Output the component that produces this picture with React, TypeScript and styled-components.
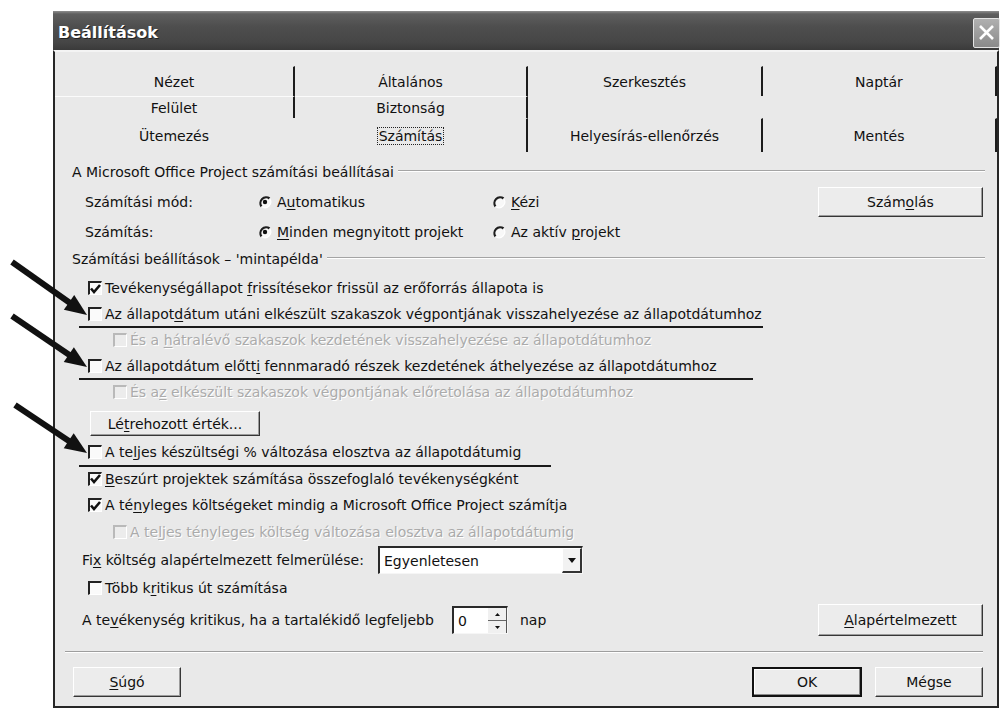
import React from "react";
import styled, { createGlobalStyle } from "styled-components";

const GlobalStyle = createGlobalStyle`
  html, body { margin: 0; padding: 0; background: #ffffff; }
  body {
    font-family: "DejaVu Sans", "Noto Sans", sans-serif;
    font-size: 14px;
    color: #111;
  }
  #root { width: 1004px; height: 715px; overflow: hidden; }
`;

const Screen = styled.div`
  position: relative;
  width: 1004px;
  height: 715px;
  box-sizing: border-box;
  padding: 11px 0 0 53px;
`;

const Dialog = styled.div`
  width: 946px;
  display: flex;
  flex-direction: column;
`;

const TitleBar = styled.div`
  height: 39px;
  box-sizing: border-box;
  display: flex;
  align-items: center;
  padding: 4px 0 0 5px;
  background: linear-gradient(
    to bottom,
    #8e8e8e 0px,
    #5e5e5e 3px,
    #4e4e4e 40%,
    #464646 80%,
    #3a3a3a 100%
  );
`;

const Title = styled.span`
  flex: 1;
  color: #fff;
  font-weight: bold;
  font-size: 16px;
  text-shadow: 1px 1px 0 #222;
`;

const CloseButton = styled.span`
  width: 27px;
  height: 30px;
  margin-right: -1px;
  box-sizing: border-box;
  border: 1px solid #e4e4e4;
  border-radius: 2px;
  background: linear-gradient(to bottom, #b0b0b0, #8a8a8a);
  display: flex;
  align-items: center;
  justify-content: center;
`;

const Body = styled.div`
  background: #e9e9e9;
  border: 2px solid #262626;
  border-top: 2px solid #f4f4f4;
  display: flex;
  flex-direction: column;
`;

const TabStrip = styled.div`
  margin-top: 14px;
  display: grid;
  grid-template-columns: 240px 233px 235px 234px;
  grid-template-rows: 30px 22px 34px;
`;

const Tab = styled.div<{ $col: number; $row: number; $sep: boolean; $hl: boolean }>`
  grid-column: ${(p) => p.$col};
  grid-row: ${(p) => p.$row};
  display: flex;
  align-items: center;
  justify-content: center;
  box-sizing: border-box;
  border-right: 2px solid ${(p) => (p.$sep ? "#1c1c1c" : "transparent")};
  border-top: 1px solid ${(p) => (p.$hl ? "#fbfbfb" : "transparent")};
`;

const Focus = styled.span`
  border: 1px dotted #222;
  padding: 0 1px;
`;

const Page = styled.div`
  padding: 8px 12px 0 17px;
  display: flex;
  flex-direction: column;
`;

const GroupHeader = styled.div`
  height: 24px;
  display: flex;
  align-items: center;
`;

const GroupRule = styled.span`
  flex: 1;
  margin-left: 4px;
  border-top: 1px solid #a4a4a4;
  border-bottom: 1px solid #ffffff;
  margin-top: -2px;
`;

const ModeRow = styled.div<{ $first?: boolean }>`
  height: 30px;
  display: flex;
  align-items: center;
  padding-left: 13px;
  margin-top: ${(p) => (p.$first ? "3px" : "0")};
`;

const ModeLabel = styled.span`
  width: 173px;
`;

const RadioCell = styled.label<{ $grow?: boolean }>`
  display: flex;
  align-items: center;
  gap: 5px;
  width: ${(p) => (p.$grow ? "auto" : "234px")};
  flex: ${(p) => (p.$grow ? 1 : "none")};
`;

const PushButton = styled.button<{ $w: number; $h: number; $default?: boolean }>`
  width: ${(p) => p.$w}px;
  height: ${(p) => p.$h}px;
  flex: none;
  box-sizing: border-box;
  font: inherit;
  color: #111;
  background: #ececec;
  padding: 0;
  border: ${(p) => (p.$default ? "2px solid #111" : "1px solid")};
  border-color: ${(p) => (p.$default ? "#111" : "#ffffff #363636 #363636 #ffffff")};
  box-shadow: ${(p) =>
    p.$default
      ? "inset -1px -1px 0 #8a8a8a, inset 1px 1px 0 #fff"
      : "inset -1px -1px 0 #9c9c9c"};
  cursor: default;
`;

const RightButton = styled(PushButton)`
  margin-left: auto;
  margin-right: 2px;
`;

const CheckList = styled.div<{ $top?: number }>`
  display: flex;
  flex-direction: column;
  align-items: flex-start;
  padding-left: 16px;
  margin-top: ${(p) => p.$top ?? 0}px;
`;

const CheckRow = styled.div<{ $h: number; $indent?: boolean; $line?: number }>`
  position: relative;
  height: ${(p) => p.$h}px;
  display: flex;
  align-items: center;
  margin-left: ${(p) => (p.$indent ? "25px" : "0")};

  &::after {
    content: "";
    display: ${(p) => (p.$line !== undefined ? "block" : "none")};
    position: absolute;
    left: -9px;
    right: ${(p) => -(p.$line ?? 0)}px;
    bottom: -1px;
    height: 2px;
    background: #1a1a1a;
  }
`;

const Box = styled.span<{ $disabled?: boolean }>`
  width: 14px;
  height: 14px;
  flex: none;
  box-sizing: border-box;
  border-top: 2px solid ${(p) => (p.$disabled ? "#b9b9b9" : "#222")};
  border-left: 2px solid ${(p) => (p.$disabled ? "#b9b9b9" : "#222")};
  border-right: 1px solid #ffffff;
  border-bottom: 1px solid #ffffff;
  background: ${(p) => (p.$disabled ? "#ececec" : "#fafafa")};
  display: flex;
  align-items: center;
  justify-content: center;
`;

const CheckText = styled.span<{ $disabled?: boolean }>`
  margin-left: 3px;
  white-space: nowrap;
  color: ${(p) => (p.$disabled ? "#ababab" : "#111")};
  text-shadow: ${(p) => (p.$disabled ? "1px 1px 0 #ffffff" : "none")};
`;

const Acc = styled.span`
  text-decoration: underline;
  text-underline-offset: 2px;
`;

const ButtonRow = styled.div`
  margin: 6px 0 3px 2px;
`;

const FieldRow = styled.div<{ $h: number; $top?: number }>`
  height: ${(p) => p.$h}px;
  margin-top: ${(p) => p.$top ?? 0}px;
  display: flex;
  align-items: center;
  padding-left: 10px;
`;

const FieldLabel = styled.span<{ $w: number }>`
  width: ${(p) => p.$w}px;
  flex: none;
  white-space: nowrap;
`;

const Select = styled.div`
  width: 205px;
  height: 28px;
  box-sizing: border-box;
  display: flex;
  background: #ffffff;
  border-top: 2px solid #2a2a2a;
  border-left: 2px solid #2a2a2a;
  border-right: 1px solid #f6f6f6;
  border-bottom: 1px solid #f6f6f6;
`;

const SelectValue = styled.span`
  flex: 1;
  display: flex;
  align-items: center;
  padding-left: 4px;
`;

const SelectButton = styled.span`
  width: 20px;
  box-sizing: border-box;
  display: flex;
  align-items: center;
  justify-content: center;
  background: #f2f2f2;
  border-top: 1px solid #fff;
  border-left: 1px solid #fff;
  border-right: 2px solid #333;
  border-bottom: 2px solid #333;
`;

const Spinner = styled.div`
  width: 56px;
  height: 28px;
  box-sizing: border-box;
  display: flex;
  background: #ffffff;
  border-top: 2px solid #2a2a2a;
  border-left: 2px solid #2a2a2a;
  border-right: 1px solid #f6f6f6;
  border-bottom: 1px solid #f6f6f6;
`;

const SpinValue = styled.span`
  flex: 1;
  display: flex;
  align-items: center;
  padding-left: 4px;
`;

const SpinButtons = styled.span`
  width: 18px;
  display: flex;
  flex-direction: column;
  background: #f0f0f0;
  border-right: 1px solid #555;
`;

const SpinHalf = styled.span<{ $top?: boolean }>`
  flex: 1;
  display: flex;
  align-items: center;
  justify-content: center;
  border-bottom: ${(p) => (p.$top ? "1px solid #666" : "none")};
`;

const Unit = styled.span`
  margin-left: 12px;
`;

const Separator = styled.div`
  margin: 15px 14px 0 10px;
  border-top: 1px solid #9e9e9e;
  border-bottom: 1px solid #ffffff;
`;

const BottomRow = styled.div`
  margin-top: 14px;
  padding: 0 14px 9px 18px;
  display: flex;
  align-items: center;
  gap: 13px;
`;

const Spacer = styled.span`
  flex: 1;
`;

const Annotations = styled.svg`
  position: absolute;
  left: 0;
  top: 0;
  pointer-events: none;
`;

/* ---------- small drawings ---------- */

const CheckMark = () => (
  <svg width="11" height="10" viewBox="0 0 11 10">
    <polyline points="1,4.5 4,8 10,1" fill="none" stroke="#111" strokeWidth="2.6" />
  </svg>
);

const Radio = ({ checked }: { checked?: boolean }) => (
  <svg width="14" height="14" viewBox="0 0 14 14" style={{ flex: "none" }}>
    <circle cx="7" cy="7" r="5.8" fill="#f8f8f8" />
    <path d="M 11.6 3.5 A 5.8 5.8 0 0 0 3.5 11.6" fill="none" stroke="#1e1e1e" strokeWidth="2.2" />
    <path d="M 3.5 11.6 A 5.8 5.8 0 0 0 11.6 3.5" fill="none" stroke="#ffffff" strokeWidth="1.2" />
    {checked && <circle cx="7" cy="7" r="2.2" fill="#111" />}
  </svg>
);

const Down = ({ w = 8, h = 5 }: { w?: number; h?: number }) => (
  <svg width={w} height={h} viewBox={`0 0 ${w} ${h}`}>
    <polygon points={`0,0 ${w},0 ${w / 2},${h}`} fill="#111" />
  </svg>
);

const Up = ({ w = 5, h = 3 }: { w?: number; h?: number }) => (
  <svg width={w} height={h} viewBox={`0 0 ${w} ${h}`}>
    <polygon points={`0,${h} ${w},${h} ${w / 2},0`} fill="#111" />
  </svg>
);

const Arrow = ({ x1, y1, x2, y2 }: { x1: number; y1: number; x2: number; y2: number }) => {
  const dx = x2 - x1;
  const dy = y2 - y1;
  const len = Math.hypot(dx, dy);
  const ux = dx / len;
  const uy = dy / len;
  const hl = 22;
  const hw = 9;
  const bx = x2 - ux * hl;
  const by = y2 - uy * hl;
  const nx = -uy;
  const ny = ux;
  return (
    <g>
      <line x1={x1} y1={y1} x2={bx + ux * 3} y2={by + uy * 3} stroke="#111" strokeWidth="6" />
      <polygon
        points={`${x2},${y2} ${bx + nx * hw},${by + ny * hw} ${bx - nx * hw},${by - ny * hw}`}
        fill="#111"
      />
    </g>
  );
};

/* ---------- data ---------- */

type TabDef = { label: React.ReactNode; col: number; row: number; sep: boolean; hl?: boolean };

const tabs: TabDef[] = [
  { label: "Nézet", col: 1, row: 1, sep: true },
  { label: "Általános", col: 2, row: 1, sep: true },
  { label: "Szerkesztés", col: 3, row: 1, sep: true },
  { label: "Naptár", col: 4, row: 1, sep: true },
  { label: "Felület", col: 1, row: 2, sep: true, hl: true },
  { label: "Biztonság", col: 2, row: 2, sep: true, hl: true },
  { label: "Ütemezés", col: 1, row: 3, sep: false },
  { label: <Focus>Számítás</Focus>, col: 2, row: 3, sep: true },
  { label: "Helyesírás-ellenőrzés", col: 3, row: 3, sep: true },
  { label: "Mentés", col: 4, row: 3, sep: true },
];

type Opt = {
  text: React.ReactNode;
  checked?: boolean;
  disabled?: boolean;
  indent?: boolean;
  line?: number;
};

const firstOpts: Opt[] = [
  {
    text: (
      <>
        Tevékenységállapot <Acc>f</Acc>rissítésekor frissül az erőforrás állapota is
      </>
    ),
    checked: true,
  },
  {
    text: (
      <>
        Az állapot<Acc>d</Acc>átum utáni elkészült szakaszok végpontjának visszahelyezése az
        állapotdátumhoz
      </>
    ),
    line: 1,
  },
  {
    text: (
      <>
        És a <Acc>h</Acc>átralévő szakaszok kezdetének visszahelyezése az állapotdátumhoz
      </>
    ),
    disabled: true,
    indent: true,
  },
  {
    text: (
      <>
        Az állapotdátum előtt<Acc>i</Acc> fennmaradó részek kezdetének áthelyezése az
        állapotdátumhoz
      </>
    ),
    line: 36,
  },
  {
    text: (
      <>
        És a<Acc>z</Acc> elkészült szakaszok végpontjának előretolása az állapotdátumhoz
      </>
    ),
    disabled: true,
    indent: true,
  },
];

const secondOpts: Opt[] = [
  {
    text: (
      <>
        A te<Acc>l</Acc>jes készültségi % változása elosztva az állapotdátumig
      </>
    ),
    line: 30,
  },
  {
    text: (
      <>
        <Acc>B</Acc>eszúrt projektek számítása összefoglaló tevékenységként
      </>
    ),
    checked: true,
  },
  {
    text: (
      <>
        A té<Acc>n</Acc>yleges költségeket mindig a Microsoft Office Project számítja
      </>
    ),
    checked: true,
  },
  {
    text: (
      <>
        A te<Acc>l</Acc>jes tényleges költség változása elosztva az állapotdátumig
      </>
    ),
    disabled: true,
    indent: true,
  },
];

const Option = ({ o, h }: { o: Opt; h: number }) => (
  <CheckRow $h={h} $indent={o.indent} $line={o.line}>
    <Box $disabled={o.disabled}>{o.checked && <CheckMark />}</Box>
    <CheckText $disabled={o.disabled}>{o.text}</CheckText>
  </CheckRow>
);

export default function App() {
  return (
    <>
      <GlobalStyle />
      <Screen>
        <Dialog>
          <TitleBar>
            <Title>Beállítások</Title>
            <CloseButton>
              <svg width="17" height="17" viewBox="0 0 17 17">
                <path d="M2 2 L15 15 M15 2 L2 15" stroke="#fff" strokeWidth="2.6" />
              </svg>
            </CloseButton>
          </TitleBar>
          <Body>
            <TabStrip>
              {tabs.map((t, i) => (
                <Tab key={i} $col={t.col} $row={t.row} $sep={t.sep} $hl={!!t.hl}>
                  {t.label}
                </Tab>
              ))}
            </TabStrip>

            <Page>
              <GroupHeader>
                <span>A Microsoft Office Project számítási beállításai</span>
                <GroupRule />
              </GroupHeader>
              <ModeRow $first>
                <ModeLabel>Számítási mód:</ModeLabel>
                <RadioCell>
                  <Radio checked />
                  <span>
                    A<Acc>u</Acc>tomatikus
                  </span>
                </RadioCell>
                <RadioCell $grow>
                  <Radio />
                  <span>
                    <Acc>K</Acc>ézi
                  </span>
                </RadioCell>
                <RightButton $w={165} $h={30}>
                  Szám<Acc>o</Acc>lás
                </RightButton>
              </ModeRow>
              <ModeRow>
                <ModeLabel>Számítás:</ModeLabel>
                <RadioCell>
                  <Radio checked />
                  <span>
                    <Acc>M</Acc>inden megnyitott projekt
                  </span>
                </RadioCell>
                <RadioCell $grow>
                  <Radio />
                  <span>
                    Az aktív <Acc>p</Acc>rojekt
                  </span>
                </RadioCell>
              </ModeRow>

              <GroupHeader>
                <span>Számítási beállítások – 'mintapélda'</span>
                <GroupRule />
              </GroupHeader>

              <CheckList $top={4}>
                {firstOpts.map((o, i) => (
                  <Option key={i} o={o} h={26} />
                ))}
                <ButtonRow>
                  <PushButton $w={170} $h={25}>
                    Lé<Acc>t</Acc>rehozott érték...
                  </PushButton>
                </ButtonRow>
                {secondOpts.map((o, i) => (
                  <Option key={i} o={o} h={26.5} />
                ))}
              </CheckList>

              <FieldRow $h={30}>
                <FieldLabel $w={296}>
                  Fi<Acc>x</Acc> költség alapértelmezett felmerülése:
                </FieldLabel>
                <Select>
                  <SelectValue>Egyenletesen</SelectValue>
                  <SelectButton>
                    <Down />
                  </SelectButton>
                </Select>
              </FieldRow>

              <CheckList>
                <Option
                  o={{
                    text: (
                      <>
                        Több k<Acc>r</Acc>itikus út számítása
                      </>
                    ),
                  }}
                  h={26.5}
                />
              </CheckList>

              <FieldRow $h={32} $top={2.5}>
                <FieldLabel $w={370}>
                  A te<Acc>v</Acc>ékenység kritikus, ha a tartalékidő legfeljebb
                </FieldLabel>
                <Spinner>
                  <SpinValue>0</SpinValue>
                  <SpinButtons>
                    <SpinHalf $top>
                      <Up />
                    </SpinHalf>
                    <SpinHalf>
                      <Down w={5} h={3} />
                    </SpinHalf>
                  </SpinButtons>
                </Spinner>
                <Unit>nap</Unit>
                <RightButton $w={165} $h={32}>
                  <Acc>A</Acc>lapértelmezett
                </RightButton>
              </FieldRow>
            </Page>

            <Separator />

            <BottomRow>
              <PushButton $w={108} $h={30}>
                <Acc>S</Acc>úgó
              </PushButton>
              <Spacer />
              <PushButton $w={110} $h={30} $default>
                OK
              </PushButton>
              <PushButton $w={108} $h={30}>
                Mégse
              </PushButton>
            </BottomRow>
          </Body>
        </Dialog>

        <Annotations width="1004" height="715" viewBox="0 0 1004 715">
          <Arrow x1={12} y1={262} x2={87} y2={315} />
          <Arrow x1={12} y1={316} x2={87} y2={367} />
          <Arrow x1={15} y1={405} x2={87} y2={453} />
        </Annotations>
      </Screen>
    </>
  );
}
